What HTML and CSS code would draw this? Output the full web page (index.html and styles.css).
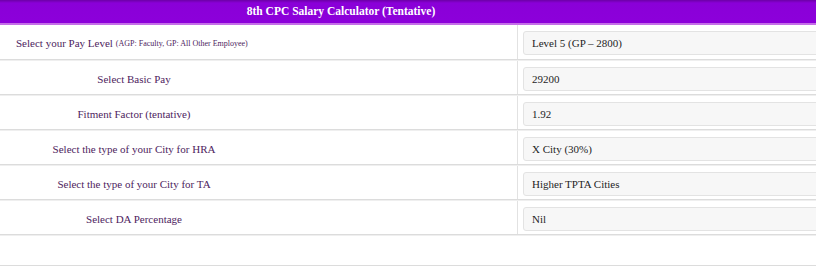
FILE: index.html
```html
<!DOCTYPE html>
<html lang="en">
<head>
    <meta charset="UTF-8">
    <title>8th CPC Salary Calculator</title>
    <link rel="stylesheet" href="styles.css">
</head>
<body>
    <div class="calc-wrapper">
        <div class="calc-header">8th CPC Salary Calculator (Tentative)</div>
        <div class="calc-row top">
            <div class="calc-label first">Select your Pay Level <small>(AGP: Faculty, GP: All Other Employee)</small></div>
            <div class="calc-value"><div class="calc-box">Level 5 (GP &ndash; 2800)</div></div>
        </div>
        <div class="calc-row">
            <div class="calc-label">Select Basic Pay</div>
            <div class="calc-gap"></div>
            <div class="calc-value"><div class="calc-box">29200</div></div>
        </div>
        <div class="calc-row">
            <div class="calc-label">Fitment Factor (tentative)</div>
            <div class="calc-gap"></div>
            <div class="calc-value"><div class="calc-box">1.92</div></div>
        </div>
        <div class="calc-row">
            <div class="calc-label">Select the type of your City for HRA</div>
            <div class="calc-gap"></div>
            <div class="calc-value"><div class="calc-box">X City (30%)</div></div>
        </div>
        <div class="calc-row">
            <div class="calc-label">Select the type of your City for TA</div>
            <div class="calc-gap"></div>
            <div class="calc-value"><div class="calc-box">Higher TPTA Cities</div></div>
        </div>
        <div class="calc-row">
            <div class="calc-label">Select DA Percentage</div>
            <div class="calc-gap"></div>
            <div class="calc-value"><div class="calc-box">Nil</div></div>
        </div>
        <div class="calc-row empty"></div>
    </div>
</body>
</html>
```

FILE: styles.css
```css
body {
    margin: 0;
    overflow: hidden;
    background: #ffffff;
    font-family: "Liberation Serif", serif;
}
.calc-wrapper {
    width: 830px;
}
.calc-header {
    height: 23px;
    line-height: 23px;
    background: linear-gradient(#6c00a6 0px, #8a00d8 3px, #8c00da 20px);
    border-bottom: 2px solid #c56ee8;
    color: #ffffff;
    font-size: 11.5px;
    font-weight: bold;
    text-align: center;
    padding-right: 148px;
}
.calc-row {
    display: grid;
    grid-template-columns: 268px 249px 1fr;
    height: 33px;
    border-bottom: 1px solid #dcdcdc;
    box-shadow: 0 1px 0 #efefef;
    margin-bottom: 1px;
}
.calc-row.top {
    height: 34px;
}
.calc-row.empty {
    height: 29px;
}
.calc-label {
    display: flex;
    align-items: center;
    justify-content: center;
    color: #4e1d5e;
    font-size: 11px;
    padding-top: 2px;
}
.calc-label.first {
    grid-column: span 2;
    justify-content: flex-start;
    padding-left: 16px;
}
.calc-label small {
    font-size: 8px;
    margin-left: 3px;
    margin-top: 1px;
}
.calc-value {
    border-left: 1px solid #e2e2e2;
    display: flex;
    align-items: center;
    padding-left: 5px;
    padding-top: 2px;
}
.calc-box {
    flex: 1;
    height: 22px;
    line-height: 22px;
    background: #f7f7f7;
    border: 1px solid #e3e3e3;
    border-radius: 3px;
    padding-left: 8px;
    color: #1e1e1e;
    font-size: 11px;
}
```
